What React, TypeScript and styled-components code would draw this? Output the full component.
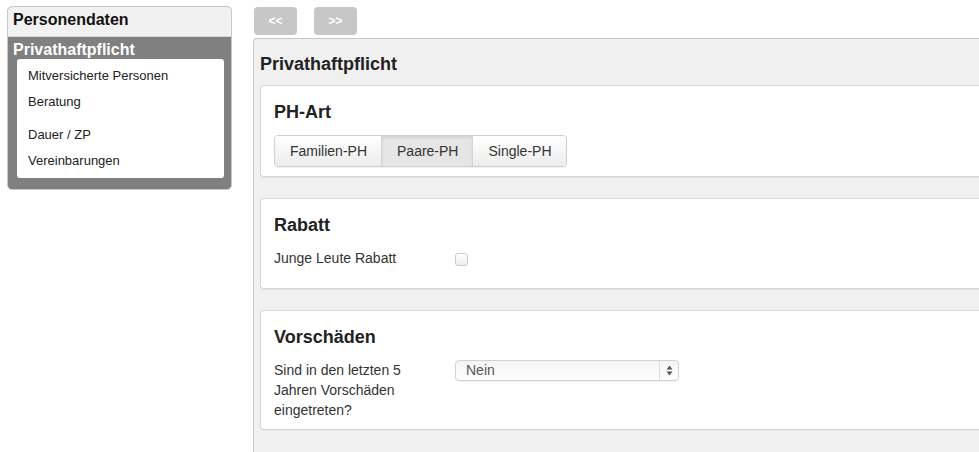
import React from "react";
import styled, { createGlobalStyle } from "styled-components";

const Global = createGlobalStyle`
  html, body {
    margin: 0;
    padding: 0;
    background: #ffffff;
    overflow: hidden;
  }
  body {
    font-family: "Liberation Sans", Arial, Helvetica, sans-serif;
    color: #333333;
  }
  *, *::before, *::after {
    box-sizing: border-box;
  }
`;

const Page = styled.div`
  display: flex;
  align-items: flex-start;
  padding: 6px 0 0 7px;
  margin-right: -30px;
`;

/* ---------- left navigation ---------- */

const Sidebar = styled.nav`
  width: 225px;
  flex: none;
  border: 1px solid #c8c8c8;
  border-radius: 5px;
  overflow: hidden;
  background: #808080;
`;

const SidebarHeader = styled.div`
  height: 30px;
  padding: 3px 5px;
  background: #f1f1f1;
  border-bottom: 1px solid #d8d8d8;
  font-size: 16px;
  line-height: 20px;
  font-weight: bold;
  color: #111111;
`;

const SidebarGroup = styled.div`
  padding: 4px 7px 11px 9px;
`;

const GroupTitle = styled.div`
  font-size: 16px;
  line-height: 18px;
  font-weight: bold;
  color: #ffffff;
  margin-left: -4px;
`;

const MenuBox = styled.ul`
  list-style: none;
  margin: 0;
  padding: 4px 10px 4px 11px;
  background: #ffffff;
  border-radius: 3px;
`;

const MenuItem = styled.li<{ $gap?: number }>`
  font-size: 13px;
  line-height: 26px;
  height: 26px;
  color: #222222;
  margin-top: ${(p) => p.$gap ?? 0}px;
`;

/* ---------- main column ---------- */

const Main = styled.div`
  flex: 1;
  margin-left: 21px;
  display: flex;
  flex-direction: column;
`;

const Pager = styled.div`
  display: flex;
  gap: 17px;
  margin: 1px 0 3px 1px;
`;

const PagerButton = styled.button`
  width: 43px;
  height: 28px;
  border: none;
  border-radius: 4px;
  background: #c7c7c7;
  color: #ffffff;
  font-family: "Liberation Sans", Arial, sans-serif;
  font-size: 12px;
  font-weight: bold;
  padding: 0;
  cursor: pointer;
`;

const Panel = styled.section`
  background: #f0f0f0;
  border: 1px solid #c9c9c9;
  border-right: none;
  border-bottom: none;
  border-radius: 4px 0 0 0;
  padding: 14px 0 40px 6px;
`;

const PanelTitle = styled.h2`
  margin: 0 0 10px 0;
  font-size: 18px;
  line-height: 22px;
  font-weight: bold;
  color: #222222;
`;

const Card = styled.div`
  background: #ffffff;
  border: 1px solid #d6d6d6;
  border-right: none;
  border-radius: 4px 0 0 4px;
  box-shadow: 0 1px 1px rgba(0, 0, 0, 0.05);
  padding: 15px 0 9px 13px;
  margin-bottom: 21px;
  &:last-child {
    margin-bottom: 0;
  }
`;

const CardTitle = styled.h3`
  margin: 0 0 12px 0;
  font-size: 18px;
  line-height: 22px;
  font-weight: bold;
  color: #222222;
`;

const SegmentGroup = styled.div`
  display: inline-flex;
  border: 1px solid #cfcfcf;
  border-radius: 4px;
  overflow: hidden;
  box-shadow: 0 1px 1px rgba(0, 0, 0, 0.06);
`;

const Segment = styled.button<{ $active?: boolean }>`
  height: 30px;
  padding: 0 14px 0 15px;
  border: none;
  border-left: 1px solid #d4d4d4;
  &:first-child {
    border-left: none;
  }
  background: ${(p) =>
    p.$active ? "#e6e6e6" : "linear-gradient(#ffffff, #ececec)"};
  box-shadow: ${(p) => (p.$active ? "inset 0 2px 3px rgba(0,0,0,0.08)" : "none")};
  font-family: "Liberation Sans", Arial, sans-serif;
  font-size: 14px;
  color: #333333;
  cursor: pointer;
`;

const FieldRow = styled.div<{ $minHeight?: number }>`
  display: flex;
  align-items: flex-start;
  min-height: ${(p) => p.$minHeight ?? 0}px;
`;

const FieldLabel = styled.label`
  width: 165px;
  flex: none;
  margin-right: 16px;
  font-size: 14px;
  line-height: 20px;
  color: #333333;
`;

const CheckBox = styled.span`
  display: block;
  width: 13px;
  height: 13px;
  margin-top: 5px;
  border: 1px solid #cccccc;
  border-radius: 3px;
  background: linear-gradient(#ffffff, #ededed);
`;

const Select = styled.div`
  display: flex;
  width: 224px;
  height: 21px;
  border: 1px solid #d2d2d2;
  border-radius: 4px;
  background: linear-gradient(#f4f4f4, #ffffff);
  box-shadow: 0 1px 1px rgba(0, 0, 0, 0.05);
`;

const SelectValue = styled.span`
  flex: 1;
  padding-left: 10px;
  font-size: 14px;
  line-height: 19px;
  color: #555555;
`;

const SelectArrows = styled.span`
  width: 19px;
  border-left: 1px solid #dcdcdc;
  display: flex;
  align-items: center;
  justify-content: center;
`;

export default function App() {
  return (
    <>
      <Global />
      <Page>
        <Sidebar>
          <SidebarHeader>Personendaten</SidebarHeader>
          <SidebarGroup>
            <GroupTitle>Privathaftpflicht</GroupTitle>
            <MenuBox>
              <MenuItem>Mitversicherte Personen</MenuItem>
              <MenuItem>Beratung</MenuItem>
              <MenuItem $gap={7}>Dauer / ZP</MenuItem>
              <MenuItem>Vereinbarungen</MenuItem>
            </MenuBox>
          </SidebarGroup>
        </Sidebar>

        <Main>
          <Pager>
            <PagerButton>&lt;&lt;</PagerButton>
            <PagerButton>&gt;&gt;</PagerButton>
          </Pager>

          <Panel>
            <PanelTitle>Privathaftpflicht</PanelTitle>

            <Card>
              <CardTitle>PH-Art</CardTitle>
              <SegmentGroup>
                <Segment>Familien-PH</Segment>
                <Segment $active>Paare-PH</Segment>
                <Segment>Single-PH</Segment>
              </SegmentGroup>
            </Card>

            <Card>
              <CardTitle>Rabatt</CardTitle>
              <FieldRow $minHeight={31}>
                <FieldLabel>Junge Leute Rabatt</FieldLabel>
                <CheckBox />
              </FieldRow>
            </Card>

            <Card>
              <CardTitle>Vorschäden</CardTitle>
              <FieldRow>
                <FieldLabel>
                  Sind in den letzten 5 Jahren Vorschäden eingetreten?
                </FieldLabel>
                <Select>
                  <SelectValue>Nein</SelectValue>
                  <SelectArrows>
                    <svg width="7" height="11" viewBox="0 0 7 11">
                      <path d="M3.5 0.5 L6.5 4.5 H0.5 Z" fill="#555" />
                      <path d="M3.5 10.5 L6.5 6.5 H0.5 Z" fill="#555" />
                    </svg>
                  </SelectArrows>
                </Select>
              </FieldRow>
            </Card>
          </Panel>
        </Main>
      </Page>
    </>
  );
}
